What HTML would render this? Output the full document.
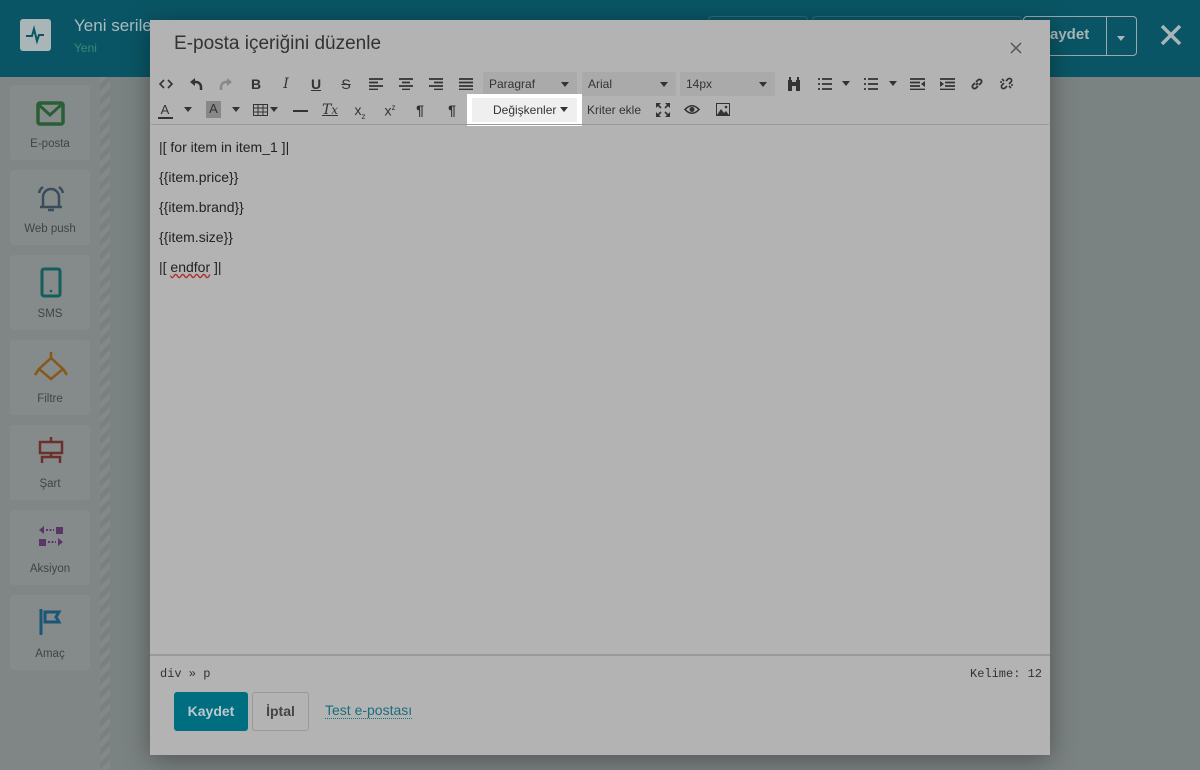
<!DOCTYPE html>
<html><head><meta charset="utf-8"><style>
*{box-sizing:border-box;margin:0;padding:0}
body{width:1200px;height:770px;overflow:hidden;background:#7b8282;font-family:"Liberation Sans",sans-serif;position:relative}
.a{position:absolute}
.hdr{left:0;top:0;width:1200px;height:77px;background:#0a5565}
.card{position:absolute;left:10px;width:80px;height:75px;background:#858b8b;border-radius:3px;text-align:center;font-size:11.5px;color:#3f4444}
.card span{position:absolute;left:0;right:0;bottom:10px}
.strip{left:100px;top:77px;width:10px;height:693px;background:repeating-linear-gradient(135deg,#838888 0 5px,#7a7f7f 5px 10px)}
.modal{left:150px;top:20px;width:900px;height:735px;background:#b3b3b3;box-shadow:0 5px 25px rgba(0,0,0,.35)}
.ic{position:absolute;font-size:14px;color:#333;font-weight:bold;text-align:center;width:20px;line-height:16px}
.sv{position:absolute}
.sel{position:absolute;top:72px;height:24px;background:#aaaaaa;border-radius:2px;font-size:12px;color:#333;padding:5px 6px}
.sel:after{content:"";position:absolute;right:8px;top:10px;border:4px solid transparent;border-top:5px solid #333}
.car{position:absolute;border:4px solid transparent;border-top:5px solid #333;width:0;height:0}
.ed p{font-size:14px;color:#222;position:absolute;left:159px}
</style></head><body>
<div class="a hdr"></div>
<div class="a" style="left:20px;top:19px;width:31px;height:32px;background:#a9b5b7;border-radius:3px"><svg width="31" height="32"><path d="M6 17h6l2-7 3 12 2-6h5" stroke="#0a5565" stroke-width="2" fill="none"/></svg></div>
<div class="a" style="left:74px;top:16px;font-size:17px;color:#a9bcc0">Yeni serile</div>
<div class="a" style="left:74px;top:41px;font-size:12px;color:#3d8a74">Yeni</div>
<div class="a" style="left:708px;top:16px;width:100px;height:32px;border:1px solid #2a6b78;border-radius:4px"></div>
<div class="a" style="left:812px;top:16px;width:210px;height:32px;border:1px solid #2a6b78;border-radius:4px"></div>
<div class="a" style="left:1023px;top:16px;width:114px;height:40px;border:1px solid #9aa9ab;border-radius:4px"></div>
<div class="a" style="left:1106px;top:16px;width:1px;height:40px;background:#9aa9ab"></div>
<div class="a" style="left:1050px;top:26px;font-size:15px;font-weight:bold;color:#a9b5b7">aydet</div>
<div class="car" style="left:1117px;top:36px;border-top-color:#a9b5b7"></div>
<svg class="a" style="left:1160px;top:24px" width="22" height="22"><path d="M2 2l18 18M20 2L2 20" stroke="#a9b5b7" stroke-width="3.5"/></svg>
<div class="a" style="left:0;top:77px;width:100px;height:693px;background:#808686"></div>
<div class="a strip"></div>
<div class="card" style="top:85px"><svg class="a" style="left:26px;top:16px" width="29" height="25"><rect x="2" y="2" width="25" height="21" rx="2" fill="none" stroke="#2a5e35" stroke-width="3.5"/><path d="M3 4l11 10 11-10" stroke="#2a5e35" stroke-width="3" fill="none"/></svg><span>E-posta</span></div>
<div class="card" style="top:170px"><svg class="a" style="left:25px;top:12px" width="32" height="32"><path d="M8 24V15a8 8 0 0116 0v9M5 25h22M13 28h6M4 11a10 10 0 014-6M28 11a10 10 0 00-4-6" stroke="#3a4c5a" stroke-width="2.5" fill="none"/></svg><span>Web push</span></div>
<div class="card" style="top:255px"><svg class="a" style="left:30px;top:12px" width="22" height="32"><rect x="2" y="2" width="18" height="27" rx="2" fill="none" stroke="#145e5b" stroke-width="3"/><circle cx="11" cy="24" r="1.3" fill="#145e5b"/></svg><span>SMS</span></div>
<div class="card" style="top:340px"><svg class="a" style="left:23px;top:12px" width="36" height="30"><path d="M18 0v6M18 6L6 17l12 10 12-10zM6 17l-4 6M30 17l4 6" stroke="#86591a" stroke-width="2.5" fill="none"/></svg><span>Filtre</span></div>
<div class="card" style="top:425px"><svg class="a" style="left:26px;top:12px" width="30" height="30"><rect x="4" y="5" width="22" height="11" fill="none" stroke="#6b302b" stroke-width="2.5"/><path d="M15 0v5M15 16v4M6 26v-6h18v6" stroke="#6b302b" stroke-width="2.5" fill="none"/></svg><span>Şart</span></div>
<div class="card" style="top:510px"><svg class="a" style="left:27px;top:15px" width="28" height="24"><rect x="19" y="2" width="7" height="7" fill="#5c3469"/><rect x="2" y="14" width="7" height="7" fill="#5c3469"/><path d="M2 5l5-4v8zM26 17l-5-4v8z" fill="#5c3469"/><path d="M9 5h8M11 17h8" stroke="#5c3469" stroke-width="2" stroke-dasharray="2 1.5"/></svg><span>Aksiyon</span></div>
<div class="card" style="top:595px"><svg class="a" style="left:28px;top:12px" width="26" height="30"><path d="M3 2v26M7 5h14l-3 5 3 5H7z" stroke="#1b5677" stroke-width="3" fill="none"/></svg><span>Amaç</span></div>

<div class="a modal">
<div class="a" style="left:24px;top:13px;font-size:19px;color:#333">E-posta içeriğini düzenle</div>
<svg class="a" style="left:860px;top:22px" width="12" height="12"><path d="M1 1l10 10M11 1L1 11" stroke="#555" stroke-width="1.5"/></svg>
</div>
<!-- toolbar row1 -->
<svg class="sv" style="left:159px;top:79px" width="14" height="10"><path d="M5 1L1 5l4 4M9 1l4 4-4 4" stroke="#333" stroke-width="1.6" fill="none"/></svg>
<svg class="sv" style="left:189px;top:77px" width="14" height="14"><path d="M1 5l5-4v8z" fill="#333"/><path d="M5 5h2a5 5 0 015 5v3" stroke="#333" stroke-width="2.5" fill="none"/></svg>
<svg class="sv" style="left:219px;top:77px" width="14" height="14"><path d="M13 5L8 1v8z" fill="#888"/><path d="M9 5H7a5 5 0 00-5 5v3" stroke="#888" stroke-width="2.5" fill="none"/></svg>
<div class="ic" style="left:246px;top:76px">B</div>
<div class="ic" style="left:276px;top:76px;font-style:italic;font-weight:normal;font-family:'DejaVu Serif'">I</div>
<div class="ic" style="left:306px;top:76px;text-decoration:underline">U</div>
<div class="ic" style="left:336px;top:76px;text-decoration:line-through;font-weight:normal">S</div>
<svg class="sv" style="left:369px;top:78px" width="14" height="12"><path d="M0 1h14M0 4.5h9M0 8h14M0 11.5h9" stroke="#333" stroke-width="1.8"/></svg>
<svg class="sv" style="left:399px;top:78px" width="14" height="12"><path d="M0 1h14M3 4.5h8M0 8h14M3 11.5h8" stroke="#333" stroke-width="1.8"/></svg>
<svg class="sv" style="left:429px;top:78px" width="14" height="12"><path d="M0 1h14M5 4.5h9M0 8h14M5 11.5h9" stroke="#333" stroke-width="1.8"/></svg>
<svg class="sv" style="left:459px;top:78px" width="14" height="12"><path d="M0 1h14M0 4.5h14M0 8h14M0 11.5h14" stroke="#333" stroke-width="1.8"/></svg>
<div class="sel" style="left:483px;width:94px">Paragraf</div>
<div class="sel" style="left:582px;width:94px">Arial</div>
<div class="sel" style="left:680px;width:95px">14px</div>
<svg class="sv" style="left:787px;top:77px" width="14" height="14"><path d="M1 3h4v11H1zM9 3h4v11H9zM2 0h2v3H2zM10 0h2v3h-2zM5 5h4v4H5z" fill="#333"/></svg>
<svg class="sv" style="left:818px;top:78px" width="14" height="12"><path d="M0 1h2M0 6h2M0 11h2M4 1h10M4 6h10M4 11h10" stroke="#333" stroke-width="1.8"/></svg><div class="car" style="left:842px;top:81px"></div>
<svg class="sv" style="left:864px;top:78px" width="14" height="12"><path d="M0 1h2M0 6h2M0 11h2M4 1h10M4 6h10M4 11h10" stroke="#333" stroke-width="1.8"/></svg><div class="car" style="left:889px;top:81px"></div>
<svg class="sv" style="left:910px;top:78px" width="15" height="12"><path d="M0 1h15M0 4.5h10M0 8h10M0 11.5h15" stroke="#333" stroke-width="1.8"/><path d="M15 3l-4 3 4 3z" fill="#333"/></svg>
<svg class="sv" style="left:940px;top:78px" width="15" height="12"><path d="M0 1h15M5 4.5h10M5 8h10M0 11.5h15" stroke="#333" stroke-width="1.8"/><path d="M0 3l4 3-4 3z" fill="#333"/></svg>
<svg class="sv" style="left:970px;top:77px" width="14" height="14"><path d="M6 8L8 6M5 6L3 8a2 2 0 003 3l2-2M9 8l2-2a2 2 0 00-3-3L6 5" stroke="#333" stroke-width="1.8" fill="none"/></svg>
<svg class="sv" style="left:999px;top:76px" width="15" height="15"><path d="M5 7L3 9a2 2 0 003 3l2-2M10 8l2-2a2 2 0 00-3-3L7 5M3 3l2 2M12 12l-2-2M1 6h2M12 9h2" stroke="#333" stroke-width="1.6" fill="none"/></svg>
<!-- row2 -->
<div class="ic" style="left:155px;top:102px;font-weight:normal;font-size:13px">A</div><div class="a" style="left:158px;top:117px;width:15px;height:2px;background:#333"></div><div class="car" style="left:184px;top:107px"></div>
<div class="a" style="left:206px;top:101px;width:15px;height:17px;background:#888;color:#333;font-size:13px;text-align:center">A</div><div class="car" style="left:232px;top:107px"></div>
<svg class="sv" style="left:253px;top:104px" width="15" height="12"><rect x="0.5" y="0.5" width="14" height="11" fill="none" stroke="#333"/><path d="M0 4h15M0 8h15M5 0v12M10 0v12" stroke="#333"/></svg><div class="car" style="left:270px;top:107px"></div>
<div class="a" style="left:293px;top:110px;width:15px;height:2px;background:#333"></div>
<div class="ic" style="left:320px;top:102px;font-style:italic;font-weight:normal;font-family:'DejaVu Serif';text-decoration:underline">T<small>x</small></div>
<div class="ic" style="left:350px;top:102px;font-weight:normal">x<sub style="font-size:8px">z</sub></div>
<div class="ic" style="left:380px;top:100px;font-weight:normal">x<sup style="font-size:8px">z</sup></div>
<div class="ic" style="left:410px;top:102px">¶</div>
<div class="ic" style="left:442px;top:102px">¶</div>
<div class="a" style="left:467px;top:94px;width:115px;height:32px;background:#fff"></div>
<div class="a" style="left:472px;top:98px;width:105px;height:24px;background:#efefef;font-size:12px;color:#333;padding:5px 0 0 21px">Değişkenler</div>
<div class="car" style="left:560px;top:107px"></div>
<div class="a" style="left:587px;top:103px;font-size:12px;color:#333">Kriter ekle</div>
<svg class="sv" style="left:656px;top:103px" width="14" height="14"><path d="M0 0h5L0 5zM14 0H9l5 5zM0 14h5L0 9zM14 14H9l5-5z" fill="#333"/><path d="M2 2l3 3M12 2L9 5M2 12l3-3M12 12L9 9" stroke="#333" stroke-width="1.6"/></svg>
<svg class="sv" style="left:684px;top:104px" width="16" height="11"><path d="M1 5.5Q8-2 15 5.5 8 13 1 5.5z" fill="none" stroke="#333" stroke-width="1.6"/><circle cx="8" cy="5.5" r="2.5" fill="#333"/></svg>
<svg class="sv" style="left:716px;top:103px" width="14" height="13"><rect x="0.5" y="0.5" width="13" height="12" fill="none" stroke="#333"/><path d="M1 12l4-6 3 4 2-2 3 4z" fill="#333"/><circle cx="10" cy="4" r="1.3" fill="#333"/></svg>
<div class="a" style="left:151px;top:124px;width:898px;height:1px;background:#999"></div>
<div class="ed">
<p style="top:139px">|[ for item in item_1 ]|</p>
<p style="top:169px">{{item.price}}</p>
<p style="top:199px">{{item.brand}}</p>
<p style="top:229px">{{item.size}}</p>
<p style="top:259px">|[ <span style="text-decoration:underline wavy #b03030">endfor</span> ]|</p>
</div>
<div class="a" style="left:150px;top:654px;width:900px;height:2px;background:#999"></div>
<div class="a" style="left:160px;top:667px;font-family:'Liberation Mono';font-size:12px;color:#333">div » p</div>
<div class="a" style="left:970px;top:667px;font-family:'Liberation Mono';font-size:12px;color:#333">Kelime: 12</div>
<div class="a" style="left:174px;top:692px;width:74px;height:39px;background:#006e81;border-radius:3px;color:#bcc9cb;font-weight:bold;font-size:14px;text-align:center;line-height:39px">Kaydet</div>
<div class="a" style="left:252px;top:692px;width:57px;height:39px;border:1px solid #999;border-radius:3px;color:#444;font-weight:bold;font-size:14px;text-align:center;line-height:37px">İptal</div>
<div class="a" style="left:325px;top:702px;font-size:14px;color:#1a6e7c;border-bottom:1px dotted #1a6e7c">Test e-postası</div>
</body></html>
